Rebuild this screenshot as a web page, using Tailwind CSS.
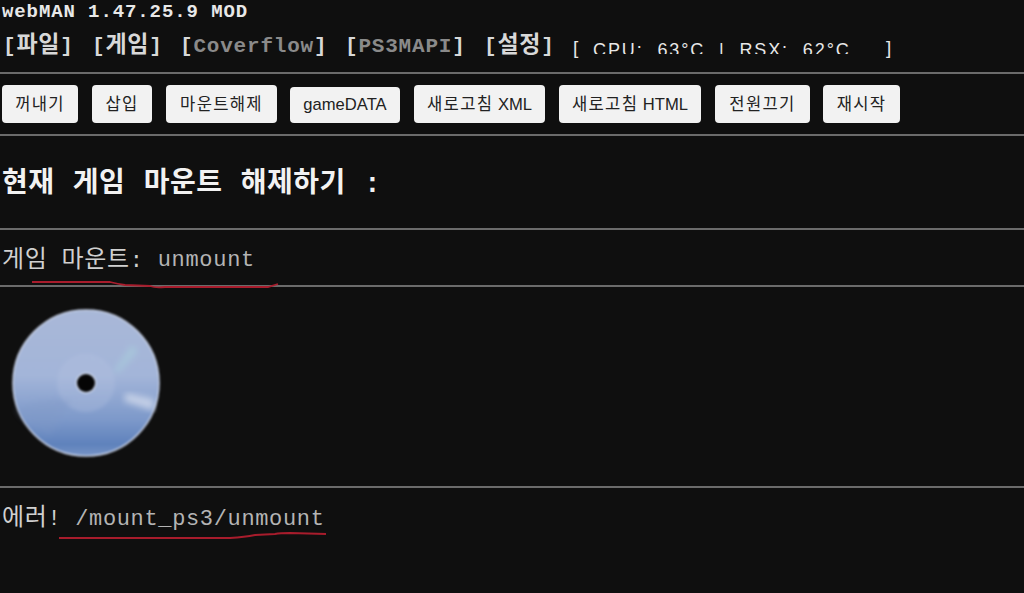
<!DOCTYPE html>
<html lang="ko">
<head>
    <meta charset="UTF-8">
    <meta name="viewport" content="width=device-width, initial-scale=1.0">
    <title>webMAN MOD</title>
    <script src="https://cdn.jsdelivr.net/npm/@tailwindcss/browser@4"></script>
</head>
<body class="bg-[#0f0f0f] h-[593px] overflow-hidden relative text-[#d0d0d0] font-['Liberation_Mono','Noto_Sans_CJK_KR',monospace]">
    <!-- 상단 -->
    <div class="h-[24px] pl-[2px] pt-[2px] text-[19px] leading-[20px] tracking-[0.9px] font-bold text-[#e8e8e8]">webMAN 1.47.25.9 MOD</div>
    <div class="h-[48px] flex items-center pl-[3px] pb-[3px] text-[21px] font-bold tracking-[0.8px] text-[#d8d8d8] whitespace-nowrap">
        <span class="w-[89px]">[<span class="text-[23px]">파일</span>]</span>
        <span class="w-[88px]">[<span class="text-[23px]">게임</span>]</span>
        <span class="w-[165px] text-[#8a8a8a]"><span class="text-[#d8d8d8]">[</span>Coverflow<span class="text-[#d8d8d8]">]</span></span>
        <span class="w-[139px] text-[#8a8a8a]"><span class="text-[#d8d8d8]">[</span>PS3MAPI<span class="text-[#d8d8d8]">]</span></span>
        <span class="w-[89px]">[<span class="text-[23px]">설정</span>]</span>
        <div class="flex items-center w-[330px] h-[20px] mt-[3px] font-normal text-[#e8e8e8] font-['Liberation_Sans',sans-serif] text-[19px]">
            <span class="w-[12px]">[</span>
            <div class="h-[12px] w-[301px] self-start mt-[4px] overflow-hidden text-[18px] leading-[16px] tracking-[1.9px] pl-[8px]">CPU:&nbsp; 63°C &nbsp;|&nbsp; RSX:&nbsp; 62°C</div>
            <span>]</span>
        </div>
    </div>
    <hr class="border-0 h-[2px] bg-[#6b6b6b]">

    <!-- 버튼 -->
    <div class="h-[60px] flex items-center pl-[2px] pb-[1px] text-[#222] text-[16.6px] font-['Liberation_Sans','Noto_Sans_CJK_KR',sans-serif]">
        <button class="w-[76px] h-[38px] mr-[14px] pt-[4px] tracking-[1.3px] bg-[#f2f2f2] rounded-[4px]">꺼내기</button>
        <button class="w-[60px] h-[38px] mr-[14px] pt-[4px] tracking-[1.3px] bg-[#f2f2f2] rounded-[4px]">삽입</button>
        <button class="w-[111px] h-[38px] mr-[13px] pt-[4px] tracking-[1.3px] bg-[#f2f2f2] rounded-[4px]">마운트해제</button>
        <button class="w-[110px] h-[36px] mt-[2px] mr-[14px] pt-[2px] bg-[#f2f2f2] rounded-[4px]">gameDATA</button>
        <button class="w-[131px] h-[38px] mr-[14px] pt-[4px] bg-[#f2f2f2] rounded-[4px]"><span class="tracking-[1.3px]">새로고침</span> XML</button>
        <button class="w-[142px] h-[38px] mr-[14px] pt-[4px] bg-[#f2f2f2] rounded-[4px]"><span class="tracking-[1.3px]">새로고침</span> HTML</button>
        <button class="w-[95px] h-[38px] mr-[13px] pt-[4px] tracking-[1.3px] bg-[#f2f2f2] rounded-[4px]">전원끄기</button>
        <button class="w-[77px] h-[38px] pt-[4px] tracking-[1.3px] bg-[#f2f2f2] rounded-[4px]">재시작</button>
    </div>
    <hr class="border-0 h-[2px] bg-[#6b6b6b]">

    <h2 class="h-[92px] pl-[2px] flex items-center pt-[6px] text-[28px] font-bold tracking-[0.5px] [word-spacing:1px] text-[#f2f2f2] whitespace-pre">현재 게임 마운트 해제하기 :</h2>
    <hr class="border-0 h-[2px] bg-[#6b6b6b]">

    <div class="h-[55px] pl-[2px] pt-[6px] flex items-center text-[22px] tracking-[0.7px] whitespace-pre">
        <span><span class="text-[24px]">게임</span> <span class="text-[24px]">마운트</span>: </span><span class="text-[#b4b4b4]">unmount</span>
    </div>
    <hr class="border-0 h-[2px] bg-[#6b6b6b]">

    <!-- 디스크 -->
    <div class="h-[199px] pl-[10px] pt-[22px]">
        <svg width="152" height="152" viewBox="0 0 152 152" class="blur-[0.8px]">
            <defs>
                <linearGradient id="discFill" x1="0" y1="0" x2="0" y2="1">
                    <stop offset="0" stop-color="#a9b8d8"/>
                    <stop offset="0.45" stop-color="#a3b5d9"/>
                    <stop offset="0.75" stop-color="#7d99ca"/>
                    <stop offset="0.92" stop-color="#5f82bc"/>
                    <stop offset="1" stop-color="#7794c6"/>
                </linearGradient>
                <filter id="soft"><feGaussianBlur stdDeviation="3"/></filter>
                <filter id="softHub"><feGaussianBlur stdDeviation="1.5"/></filter>
            </defs>
            <circle cx="76" cy="74" r="73" fill="url(#discFill)" stroke="#c6d0e6" stroke-width="1.5"/>
            <circle cx="76" cy="74" r="29" fill="#b6c4e0" fill-opacity="0.3" filter="url(#softHub)"/>
            <path d="M104 62 L122 36 L128 42 L108 64 Z" fill="#a9d4dc" fill-opacity="0.55" filter="url(#soft)"/>
            <path d="M116 84 L144 90 L144 102 L114 92 Z" fill="#d6dded" fill-opacity="0.75" filter="url(#soft)"/>
            <path d="M6 100 Q40 86 62 92 L40 126 Q18 118 6 100 Z" fill="#7d97c7" fill-opacity="0.35" filter="url(#soft)"/>
            <circle cx="76" cy="74" r="10.5" fill="#c9d3e8"/>
            <circle cx="76" cy="74" r="9" fill="#050505"/>
        </svg>
    </div>
    <hr class="border-0 h-[2px] bg-[#6b6b6b]">

    <div class="h-[60px] pl-[2px] pt-[2px] flex items-center text-[22px] tracking-[0.65px] whitespace-pre">
        <span><span class="text-[24px]">에러</span>! </span><span class="text-[#b4b4b4]">/mount_ps3/unmount</span>
    </div>

    <!-- 빨간 밑줄 -->
    <svg class="absolute left-0 top-0 pointer-events-none" width="1024" height="593" fill="none" stroke="#a81c2c" stroke-width="1.8">
        <path d="M32 282 L110 282 Q118 284 125 285 L150 286 Q155 288 165 287 L268 287 L278 284"/>
        <path d="M59 538 L230 538 Q245 537 255 535 L275 534 Q280 533 290 533 L326 534"/>
    </svg>
</body>
</html>
